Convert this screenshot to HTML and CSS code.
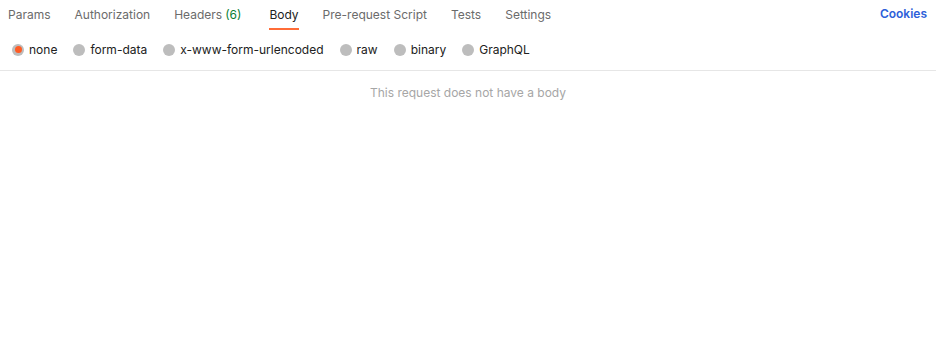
FILE: index.html
```html
<!DOCTYPE html>
<html lang="en">
<head>
    <meta charset="utf-8">
    <title>Body</title>
    <link rel="stylesheet" href="styles.css">
</head>
<body>
    <nav class="tabs">
        <a class="tab">Params</a>
        <a class="tab">Authorization</a>
        <a class="tab">Headers <span class="count">(6)</span></a>
        <a class="tab active">Body</a>
        <a class="tab">Pre-request Script</a>
        <a class="tab">Tests</a>
        <a class="tab">Settings</a>
        <a class="cookies">Cookies</a>
    </nav>
    <div class="modes">
        <label class="mode"><span class="radio checked"></span>none</label>
        <label class="mode"><span class="radio"></span>form-data</label>
        <label class="mode"><span class="radio"></span>x-www-form-urlencoded</label>
        <label class="mode"><span class="radio"></span>raw</label>
        <label class="mode"><span class="radio"></span>binary</label>
        <label class="mode"><span class="radio"></span>GraphQL</label>
    </div>
    <p class="empty">This request does not have a body</p>
</body>
</html>
```

FILE: styles.css
```css
body{
    margin: 0;
    font-family: Inter, "Noto Sans", Arial, sans-serif;
    font-size: 12px;
    color: #212121;
    background: #fff;
}
.tabs{
    display: flex;
    align-items: stretch;
    height: 30px;
    padding: 0 9px 0 8px;
}
.tab{
    display: flex;
    align-items: center;
    margin-right: 24px;
    color: #6b6b6b;
    border-bottom: 2px solid transparent;
    box-sizing: border-box;
    padding-top: 1px;
    cursor: pointer;
}
.tab.active{
    color: #212121;
    border-bottom-color: #ff6c37;
}
.count{
    color: #0a7f36;
    margin-left: 3px;
    margin-right: 4px;
}
.cookies{
    margin-left: auto;
    display: flex;
    align-items: center;
    padding-bottom: 3px;
    color: #2d5fd9;
    font-weight: 600;
    cursor: pointer;
}
.modes{
    display: flex;
    align-items: center;
    box-sizing: border-box;
    height: 41px;
    padding: 0 12px 1px;
    border-bottom: 1px solid #e6e6e6;
}
.mode{
    display: flex;
    align-items: center;
    margin-right: 16px;
    cursor: pointer;
}
.radio{
    width: 12px;
    height: 12px;
    border-radius: 50%;
    background: #bdbdbd;
    margin-right: 5px;
    display: flex;
    align-items: center;
    justify-content: center;
}
.radio.checked::after{
    content: "";
    width: 7px;
    height: 7px;
    border-radius: 50%;
    background: #ff5c25;
}
.empty{
    margin: 14px 0 0;
    text-align: center;
    font-size: 12px;
    color: #a6a6a6;
}
```
